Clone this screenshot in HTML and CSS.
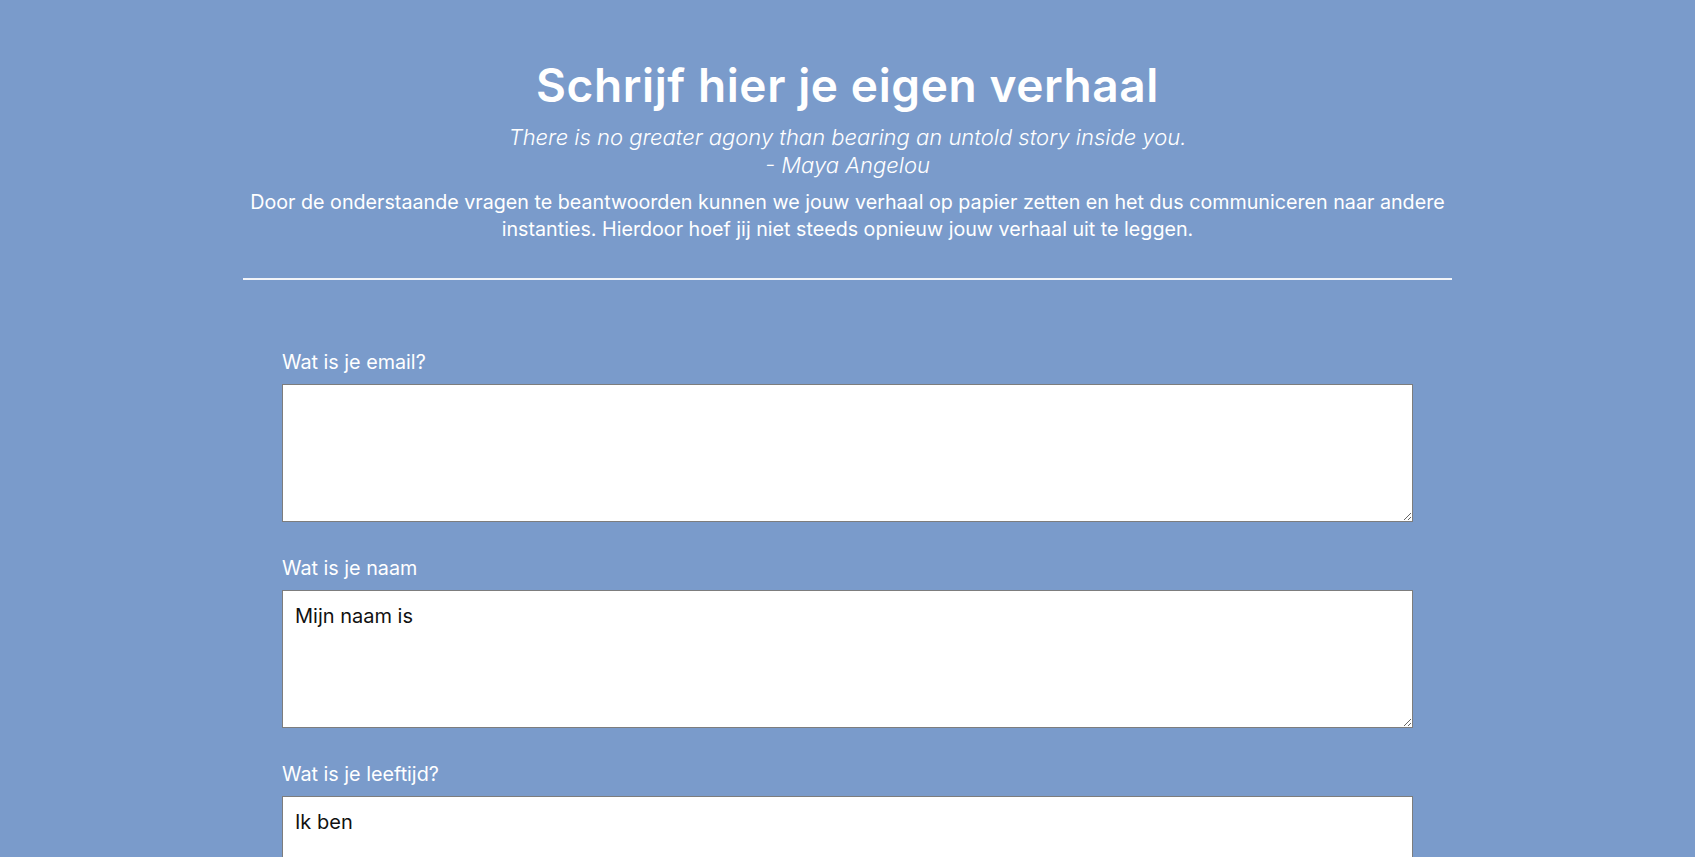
FILE: index.html
```html
<!DOCTYPE html>
<html lang="nl">
<head>
<meta charset="utf-8">
<title>Schrijf hier je eigen verhaal</title>
<link rel="stylesheet" href="styles.css">
</head>
<body>
<main class="page">
  <header class="intro">
    <h1 class="title">Schrijf hier je eigen verhaal</h1>
    <p class="quote">There is no greater agony than bearing an untold story inside you.<br>- Maya Angelou</p>
    <p class="lead">Door de onderstaande vragen te beantwoorden kunnen we jouw verhaal op papier zetten en het dus communiceren naar andere instanties. Hierdoor hoef jij niet steeds opnieuw jouw verhaal uit te leggen.</p>
  </header>
  <hr class="divider">
  <form class="story-form">
    <div class="field">
      <label class="field-label" for="email">Wat is je email?</label>
      <textarea class="field-input" id="email"></textarea>
    </div>
    <div class="field">
      <label class="field-label" for="naam">Wat is je naam</label>
      <textarea class="field-input" id="naam">Mijn naam is</textarea>
    </div>
    <div class="field">
      <label class="field-label" for="leeftijd">Wat is je leeftijd?</label>
      <textarea class="field-input" id="leeftijd">Ik ben</textarea>
    </div>
  </form>
</main>
</body>
</html>
```

FILE: styles.css
```css
html, body {
  margin: 0;
  padding: 0;
}

body {
  background: #7a9bcb;
  color: #ffffff;
  font-family: "Inter", "Open Sans", sans-serif;
  height: 857px;
  overflow: hidden;
}

.page {
  width: 1209px;
  margin: 0 auto;
  padding-top: 57px;
}

.intro {
  text-align: center;
}

.title {
  margin: 0;
  font-size: 46px;
  line-height: 56px;
  font-weight: 600;
  letter-spacing: 0.6px;
}

.quote {
  margin: 10px 0 0;
  font-size: 22px;
  line-height: 28px;
  font-style: italic;
  font-weight: 300;
}

.lead {
  margin: 10px 0 0;
  font-size: 19.7px;
  line-height: 27px;
  font-weight: 400;
}

.divider {
  margin: 35px 0 0;
  border: 0;
  border-top: 2px solid #f2f4f8;
  height: 0;
}

.story-form {
  padding: 70px 39px 0;
  display: flex;
  flex-direction: column;
  gap: 34px;
}

.field {
  display: flex;
  flex-direction: column;
  gap: 10px;
}

.field-label {
  font-size: 19.75px;
  line-height: 24px;
  font-weight: 400;
}

.field-input {
  box-sizing: border-box;
  width: 100%;
  height: 138px;
  margin: 0;
  padding: 13px 12px 12px;
  border: 1px solid #7d7d7d;
  border-radius: 0;
  background: #ffffff;
  color: #111111;
  font-family: "Inter", "Open Sans", sans-serif;
  font-size: 20px;
  line-height: 24px;
}
```
